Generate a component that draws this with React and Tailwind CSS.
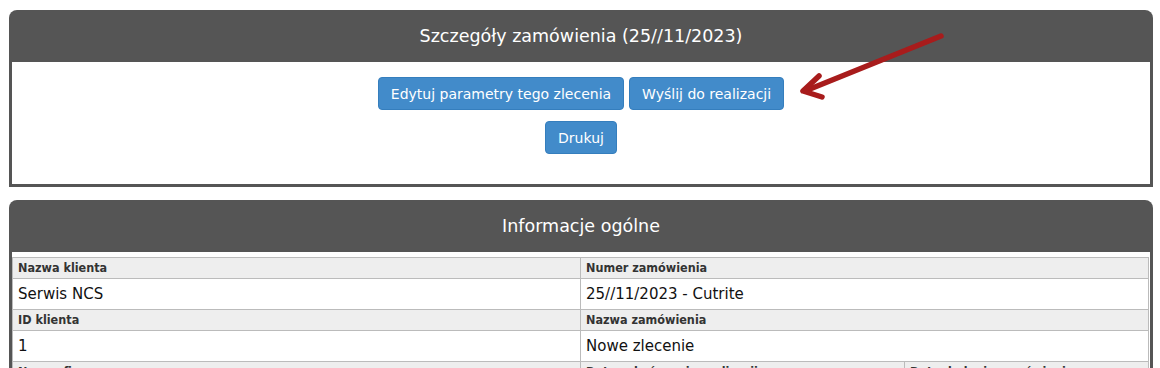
import React from 'react';

const font = { fontFamily: '"DejaVu Sans", Tahoma, sans-serif' };
const cond = { fontFamily: '"DejaVu Sans Condensed", "DejaVu Sans", Tahoma, sans-serif' };

function Panel({ title, children }) {
  return (
    <div className="rounded-t-[8px] bg-[#555555] px-[3px] pb-[3px]">
      <div className="h-[52px] flex items-center justify-center text-white text-[17.5px]">
        {title}
      </div>
      <div className="bg-white">{children}</div>
    </div>
  );
}

function Btn({ children }) {
  return (
    <button
      type="button"
      className="h-[33px] px-3 rounded-[4px] border border-[#357ebd] bg-[#428bca] text-white text-[14px] leading-5"
    >
      {children}
    </button>
  );
}

function Label({ children }) {
  return (
    <div
      className="h-[20px] flex items-center px-[5px] bg-[#eeeeee] text-[12.5px] font-bold text-[#333333]"
      style={cond}
    >
      {children}
    </div>
  );
}

function Value({ children, className = '' }) {
  return (
    <div className={`h-[30px] flex items-center px-[5px] bg-white text-[15px] text-[#111111] ${className}`}>
      {children}
    </div>
  );
}

export default function App() {
  return (
    <div className="relative w-[1160px] h-[368px] overflow-hidden bg-white" style={font}>
      <div className="pt-[10px] pl-[9px] pr-[7px] flex flex-col gap-[13px]">
        <Panel title="Szczegóły zamówienia (25//11/2023)">
          <div className="pt-[15px] pb-[30px] flex flex-col items-center gap-[11px]">
            <div className="flex gap-[5px]">
              <Btn>Edytuj parametry tego zlecenia</Btn>
              <Btn>Wyślij do realizacji</Btn>
            </div>
            <Btn>Drukuj</Btn>
          </div>
        </Panel>

        <Panel title="Informacje ogólne">
          <div className="pt-[5px] pr-[1px]">
            <div className="border border-[#bbbbbb] bg-[#bbbbbb] grid grid-cols-[567px_1fr] gap-px">
              <Label>Nazwa klienta</Label>
              <Label>Numer zamówienia</Label>
              <Value>Serwis NCS</Value>
              <Value>25//11/2023 - Cutrite</Value>
              <Label>ID klienta</Label>
              <Label>Nazwa zamówienia</Label>
              <Value className="text-[#3a6690]">1</Value>
              <Value>Nowe zlecenie</Value>
            </div>
            <div className="border-x border-[#bbbbbb] bg-[#bbbbbb] grid grid-cols-[567px_323px_1fr] gap-px">
              <Label>Nazwa firmy</Label>
              <Label>Data zakończenia realizacji</Label>
              <Label>Data dodania zamówienia</Label>
            </div>
          </div>
        </Panel>
      </div>

      <svg className="absolute left-0 top-0 pointer-events-none" width="1160" height="368">
        <g stroke="#a81c1c" strokeWidth="5.5" strokeLinecap="round" strokeLinejoin="round" fill="none">
          <line x1="941" y1="36" x2="805" y2="91" />
          <polyline points="819,76 803,91 822,97" />
        </g>
      </svg>
    </div>
  );
}
